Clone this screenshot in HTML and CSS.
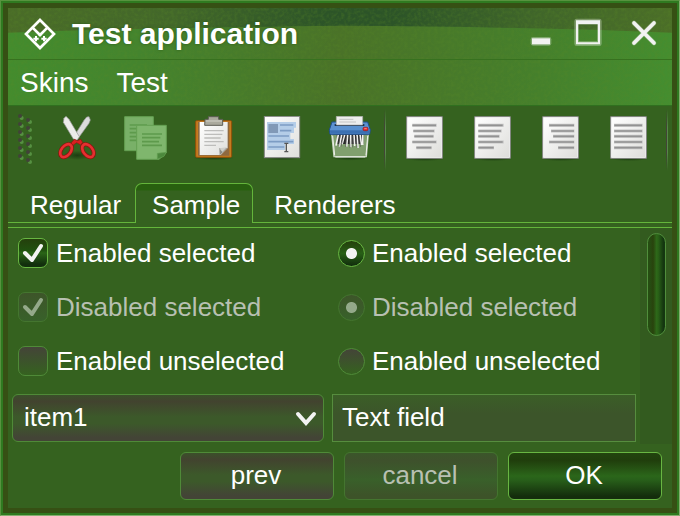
FILE: index.html
```html
<!DOCTYPE html>
<html lang="en">
<head>
<meta charset="utf-8">
<meta name="viewport" content="width=device-width, initial-scale=1">
<title>Test application</title>
<link rel="stylesheet" href="styles.css">
</head>
<body>
<div class="window">
  <div class="frame">
    <header class="header">
      <svg class="texture" viewBox="0 0 664 98" preserveAspectRatio="none" aria-hidden="true">
        <defs>
          <linearGradient id="band"><stop offset="0" stop-color="#4a6c28"/><stop offset=".25" stop-color="#42672a"/><stop offset=".48" stop-color="#2c5428"/><stop offset=".58" stop-color="#2c5428"/><stop offset=".8" stop-color="#40662a"/><stop offset="1" stop-color="#4b6e28"/></linearGradient>
          <linearGradient id="field"><stop offset="0" stop-color="#438c2e"/><stop offset=".2" stop-color="#44842e"/><stop offset=".5" stop-color="#4a7228"/><stop offset=".8" stop-color="#45802c"/><stop offset="1" stop-color="#448e30"/></linearGradient>
          <filter id="noise" x="0" y="0" width="100%" height="100%"><feTurbulence type="fractalNoise" baseFrequency=".3" numOctaves="2" seed="4"/><feColorMatrix values="0 0 0 0 .1  0 0 0 0 .25  0 0 0 0 .02  1.6 0 0 0 -.6"/></filter>
        </defs>
        <path fill="url(#field)" d="M0 0h664v98H0z"/>
        <path fill="url(#band)" d="M0 0H664V25Q520 19 332 18Q140 20 0 25z"/>
        <path filter="url(#noise)" opacity=".4" d="M0 0h664v98H0z"/>
      </svg>
      <div class="titlebar">
        <svg class="logo" viewBox="0 0 120 120" aria-hidden="true"><path fill="none" stroke="#fff" stroke-width="8" d="M60 18L102 60 60 102 18 60zM40 43L60 63 80 43"/><path fill="#fff" d="M56 58h8v8h-8zM45 66h6v5h5v6h-5v5h-6v-5h-5v-6h5zM69 66h6v5h5v6h-5v5h-6v-5h-5v-6h5z"/></svg>
        <h1 class="title">Test application</h1>
        <div class="controls">
          <button class="control" type="button" aria-label="Minimize"><svg viewBox="0 5 96 96"><path class="halo" d="M51 69h48v12H51z"/><path fill="#f2f2f2" d="M48 66h54v18H48z"/></svg></button>
          <button class="control" type="button" aria-label="Maximize"><svg viewBox="0 5 96 96"><path class="halo" d="M14 14h68v68H14z"/><path fill="#f2f2f2" fill-rule="evenodd" d="M12 12h72v72H12zM18 24v54h60V24z"/></svg></button>
          <button class="control" type="button" aria-label="Close"><svg viewBox="0 5 96 96"><path class="halo" d="M18 20L78 80M78 20L18 80"/><path fill="none" stroke="#f2f2f2" stroke-width="11" stroke-linecap="round" d="M18 20L78 80M78 20L18 80"/></svg></button>
        </div>
      </div>
      <nav class="menubar"><a href="#skins">Skins</a><a href="#test">Test</a></nav>
    </header>

    <div class="toolbar" role="toolbar" aria-label="Edit">
      <svg class="grip" viewBox="48 30 54 180" aria-hidden="true">
        <g fill="#569042"><circle cx="65" cy="54" r="6"/><circle cx="65" cy="78" r="6"/><circle cx="65" cy="102" r="6"/><circle cx="65" cy="126" r="6"/><circle cx="65" cy="150" r="6"/><circle cx="65" cy="174" r="6"/><circle cx="90" cy="66" r="6"/><circle cx="90" cy="90" r="6"/><circle cx="90" cy="114" r="6"/><circle cx="90" cy="138" r="6"/><circle cx="90" cy="162" r="6"/><circle cx="90" cy="186" r="6"/></g>
        <g fill="#424239"><circle cx="60" cy="48" r="6"/><circle cx="60" cy="72" r="6"/><circle cx="60" cy="96" r="6"/><circle cx="60" cy="120" r="6"/><circle cx="60" cy="144" r="6"/><circle cx="60" cy="168" r="6"/><circle cx="84" cy="60" r="6"/><circle cx="84" cy="84" r="6"/><circle cx="84" cy="108" r="6"/><circle cx="84" cy="132" r="6"/><circle cx="84" cy="156" r="6"/><circle cx="84" cy="180" r="6"/></g>
      </svg>
      <button class="tool" type="button" aria-label="Cut"><svg viewBox="159 48 144 144">
        <defs><radialGradient id="shade"><stop offset="0" stop-color="#0c2408" stop-opacity=".6"/><stop offset="1" stop-color="#0c2408" stop-opacity="0"/></radialGradient></defs>
        <ellipse cx="232" cy="166" rx="42" ry="14" fill="url(#shade)"/>
        <path d="M267 50L271 60 267 70 236 113 226 121 222 109 252 61 260 51z" fill="#dcdcdc" stroke="#979797" stroke-width="2"/>
        <path d="M198 49L192 55 190 67 220 117 231 121 238 110 207 58z" fill="#ececea" stroke="#979797" stroke-width="2"/>
        <g fill="none" stroke="#920f0f" stroke-width="12"><ellipse cx="198" cy="152" rx="14" ry="22" transform="rotate(38 198 152)"/><ellipse cx="264" cy="152" rx="14" ry="22" transform="rotate(-38 264 152)"/></g>
        <path d="M223 118L232 122 242 118 248 127 242 135 230 128 219 136 213 129z" fill="#d92020" stroke="#920f0f" stroke-width="2"/>
        <g fill="none" stroke="#e53030" stroke-width="8"><ellipse cx="198" cy="152" rx="14" ry="22" transform="rotate(38 198 152)"/><ellipse cx="264" cy="152" rx="14" ry="22" transform="rotate(-38 264 152)"/></g>
      </svg></button>
      <button class="tool" type="button" aria-label="Copy" disabled><svg viewBox="363 48 144 144">
        <path fill="#79b068" stroke="#64a052" stroke-width="3" d="M374 50h86v102h-86z"/><path fill="none" stroke="#5e9a4c" stroke-width="5" d="M389 75h52M389 86h45M389 98h52M389 110h43M389 121h47"/>
        <path fill="#7fb66d" stroke="#64a052" stroke-width="3" d="M410 76h89v82l-22 20h-67z"/><path fill="none" stroke="#5e9a4c" stroke-width="5" d="M426 102h60M426 113h55M426 125h51M426 136h60"/><path fill="#4c883c" stroke="#64a052" stroke-width="2" d="M472 178v-18l27-3-7 12z"/>
      </svg></button>
      <button class="tool" type="button" aria-label="Paste"><svg viewBox="12 48 144 144">
        <defs><linearGradient id="paper" x1="0" y1="0" x2="1" y2="1"><stop offset="0" stop-color="#fff"/><stop offset="1" stop-color="#dededb"/></linearGradient></defs>
        <ellipse cx="86" cy="174" rx="62" ry="7" fill="url(#shade)"/>
        <rect x="32" y="62" width="108" height="110" rx="3" fill="#c67b20" stroke="#8f5008" stroke-width="3"/><path fill="#8e6940" d="M39 66h94v101H39z"/>
        <path fill="url(#paper)" d="M44 66h84v78l-21 21H44z"/><path fill="none" stroke="#bdbdbb" stroke-width="4" d="M58 92h58M58 103h54M58 114h49M58 125h58M58 136h35"/>
        <path fill="#8c8c86" d="M103 144h24l-23 22z"/><path fill="#cfcfca" d="M103 145l23-3-14 14z"/>
        <path fill="#aaa99d" stroke="#5d5d55" stroke-width="3" d="M60 58h10v-8h31v8h12v18H59z"/><path stroke="#d2d1c8" stroke-width="3" d="M62 63h49"/>
      </svg></button>
      <button class="tool" type="button" aria-label="Select all"><svg viewBox="216 48 144 144">
        <ellipse cx="291" cy="174" rx="62" ry="7" fill="url(#shade)"/><rect x="238" y="49" width="106" height="124" fill="url(#paper)" stroke="#858585" stroke-width="3"/>
        <path fill="#b4cde8" d="M246 66h87v17h-6v16h-11v18h11v15h-27v18h-54z"/><path fill="#8199b7" d="M250 72h29v27h-29z"/><path fill="none" stroke="#7c9cc4" stroke-width="5" d="M285 75h40M285 92h34M250 108h62M250 125h75M250 141h48"/>
        <path fill="none" stroke="#555" stroke-width="4" d="M304 131v23M298 130h12M298 155h12"/>
      </svg></button>
      <button class="tool" type="button" aria-label="Delete"><svg viewBox="420 48 144 144">
        <ellipse cx="495" cy="174" rx="60" ry="8" fill="url(#shade)"/><path fill="#809f6e" stroke="#c8d4c1" stroke-width="4" d="M440 100h110l-6 70h-97z"/><path fill="none" stroke="#eef1eb" stroke-width="3" d="M451 171h90M443 108l6 58M548 108l-5 58"/>
        <path fill="#282828" d="M455 103h80v29h-78z"/>
        <path fill="none" stroke="#f2f2f0" stroke-width="5" d="M460 104l-7 33M470 104l-7 36M479 104l-8 29M488 104l-3 36M497 104v38M507 104l2 34M516 104l3 40M525 104l4 31M533 104v31"/>
        <path fill="none" stroke="#555" stroke-width="2" d="M465 107l-4 32M475 107l-7 33M484 106l-2 35M493 107l2 37M503 107v35M513 107l3 36M522 107l5 34"/>
        <path fill="#5b91d0" stroke="#204e8c" stroke-width="3" d="M441 66h107l8 24-2 13H435l-2-13z"/><path fill="#3b70b2" d="M434 91h121l-2 10H437z"/>
        <path stroke="#18304f" stroke-width="6" d="M449 75h89"/><path fill="#eee" stroke="#aaa" stroke-width="2" d="M454 49h79v26h-79z"/><path fill="none" stroke="#c4c4c4" stroke-width="3" d="M463 58h42M463 66h50"/><rect x="534" y="82" width="15" height="10" rx="4" fill="#ee3333" stroke="#920f0f" stroke-width="2"/><path stroke="#fff" stroke-opacity=".65" stroke-width="2" d="M538 85h7"/>
      </svg></button>
      <span class="separator"></span>
      <button class="tool" type="button" aria-label="Align center"><svg viewBox="60 48 144 144"><ellipse cx="134" cy="177" rx="62" ry="6" fill="url(#shade)"/><path fill="#fff" stroke="#858585" stroke-width="3" d="M80 50h107v125H80z"/><path fill="url(#paper)" d="M84 54h99v118H84z"/><path class="lines-soft" d="M97 76h73M100 93h64M103 109h58M97 126h73M109 143h46"/><path class="lines" d="M97 76h71M100 93h62M103 109h57M97 126h71M109 143h45"/></svg></button>
      <button class="tool" type="button" aria-label="Align left"><svg viewBox="264 48 144 144"><ellipse cx="338" cy="177" rx="62" ry="6" fill="url(#shade)"/><path fill="#fff" stroke="#858585" stroke-width="3" d="M284 50h107v125H284z"/><path fill="url(#paper)" d="M288 54h99v118h-99z"/><path class="lines-soft" d="M295 76h76M295 93h70M295 109h64M295 126h76M295 143h47"/><path class="lines" d="M295 76h73M295 93h68M295 109h62M295 126h73M295 143h46"/></svg></button>
      <button class="tool" type="button" aria-label="Align right"><svg viewBox="468 48 144 144"><ellipse cx="542" cy="177" rx="62" ry="6" fill="url(#shade)"/><path fill="#fff" stroke="#858585" stroke-width="3" d="M488 50h107v125H488z"/><path fill="url(#paper)" d="M492 54h99v118h-99z"/><path class="lines-soft" d="M507 76h76M513 93h70M519 109h64M507 126h76M534 143h49"/><path class="lines" d="M508 76h74M514 93h68M520 109h62M508 126h74M535 143h47"/></svg></button>
      <button class="tool" type="button" aria-label="Justify"><svg viewBox="672 48 144 144"><ellipse cx="746" cy="177" rx="62" ry="6" fill="url(#shade)"/><path fill="#fff" stroke="#858585" stroke-width="3" d="M692 50h107v125H692z"/><path fill="url(#paper)" d="M696 54h99v118h-99z"/><path class="lines-soft" d="M702 76h86M702 93h86M702 109h86M702 126h86M702 143h86"/><path class="lines" d="M703 76h83M703 93h83M703 109h83M703 126h83M703 143h83"/></svg></button>
      <span class="separator end"></span>
    </div>

    <div class="tabs" role="tablist">
      <button class="tab" role="tab" type="button" aria-selected="false">Regular</button>
      <button class="tab selected" role="tab" type="button" aria-selected="true">Sample</button>
      <button class="tab" role="tab" type="button" aria-selected="false">Renderers</button>
      <span class="tab-fill"></span>
    </div>

    <form class="content">
      <div class="panel">
        <div class="fields">
          <label class="option"><span class="check"><input type="checkbox" checked><svg viewBox="0 0 30 30"><path d="M7 15l7 7 9-14"/></svg></span>Enabled selected</label>
          <label class="option"><span class="radio"><input type="radio" name="enabled" checked></span>Enabled selected</label>
          <label class="option off"><span class="check"><input type="checkbox" checked disabled><svg viewBox="0 0 30 30"><path d="M7 15l7 7 9-14"/></svg></span>Disabled selected</label>
          <label class="option off"><span class="radio"><input type="radio" name="disabled" checked disabled></span>Disabled selected</label>
          <label class="option"><span class="check"><input type="checkbox"></span>Enabled unselected</label>
          <label class="option"><span class="radio"><input type="radio" name="enabled"></span>Enabled unselected</label>
          <div class="combo">
            <select aria-label="Item"><option>item1</option></select>
            <svg class="arrow" viewBox="0 0 24 20" aria-hidden="true"><path d="M4 5l8 9 8-9"/></svg>
          </div>
          <input class="text" type="text" aria-label="Text field" value="Text field">
        </div>
        <div class="scrollbar"><div class="thumb"></div></div>
      </div>
      <footer class="actions">
        <button class="button" type="button">prev</button>
        <button class="button" type="button" disabled>cancel</button>
        <button class="button primary" type="submit">OK</button>
      </footer>
    </form>
  </div>
</div>
</body>
</html>
```

FILE: styles.css
```css
*, *::before, *::after { box-sizing: border-box; }

body {
  margin: 0;
  color: #fff;
  background: #35621f;
  font-family: "Liberation Sans", Arial, sans-serif;
  font-size: 26px;
  line-height: 30px;
}

button, input, select {
  margin: 0;
  color: inherit;
  font: inherit;
}

.window {
  display: flex;
  min-height: 100vh;
  border: 1px solid;
  border-color: #58923f #86ad70 #86ad70 #58923f;
  background: #2f7a20;
  padding: 2px;
}

.frame {
  display: flex;
  flex: 1;
  flex-direction: column;
  min-width: 0;
  border: 5px solid #365014;
  background: #35621f;
}

.header {
  position: relative;
  border-bottom: 1px solid #30701f;
}

.texture {
  position: absolute;
  inset: 0;
  width: 100%;
  height: 100%;
}

.titlebar {
  position: relative;
  display: flex;
  align-items: center;
  height: 52px;
  padding: 0 12px;
  border-bottom: 1px solid #37711f;
}

.logo { width: 40px; height: 40px; }

.title {
  flex: 1;
  margin: 0 0 0 12px;
  font-size: 30px;
  line-height: 36px;
  text-shadow: 0 0 3px #2a5a18;
}

.controls { display: flex; gap: 24px; }

.control {
  width: 32px;
  height: 32px;
  padding: 0;
  border: 0;
  background: none;
}

.control svg { display: block; width: 32px; height: 32px; overflow: visible; }

.halo {
  fill: none;
  stroke: #fff;
  stroke-width: 14;
  stroke-linejoin: round;
  stroke-linecap: round;
  opacity: .3;
}

.menubar {
  position: relative;
  display: flex;
  gap: 28px;
  padding: 7px 12px 6px;
  font-size: 28px;
  line-height: 32px;
}

.menubar a { color: inherit; text-decoration: none; }

.toolbar {
  display: flex;
  height: 68px;
}

.grip { width: 18px; height: 60px; margin: 4px 9px 0 8px; }

.tool {
  flex: 0 0 68px;
  padding: 0;
  border: 0;
  background: none;
}

.tool svg { display: block; width: 48px; height: 48px; margin: 0 auto; }

.lines, .lines-soft { fill: none; stroke: #929292; stroke-width: 5; }
.lines-soft { stroke: #c3c3c3; stroke-width: 9; }

.separator {
  flex: 0 0 2px;
  margin: 3px 4px 3px 1px;
  background: linear-gradient(90deg, #444438 50%, #57884a 50%);
  -webkit-mask-image: linear-gradient(transparent, #000 30%, #000 70%, transparent);
  mask-image: linear-gradient(transparent, #000 30%, #000 70%, transparent);
}

.separator.end { margin-left: 4px; }

.tabs {
  display: flex;
  padding-top: 9px;
}

.tab {
  height: 40px;
  padding: 4px 16px 0;
  border: 0;
  border-bottom: 1px solid #64b53b;
  background: none;
}

.tab:first-child { padding: 4px 14px 0 22px; }

.tab:nth-child(3) { padding-left: 21px; }

.tab.selected {
  border: 1px solid #64b53b;
  border-bottom: 0;
  border-radius: 7px 7px 0 0;
  padding: 2px 12px 0 16px;
  background: linear-gradient(#28600f 6px, #35621f 7px);
}

.tab-fill { flex: 1; border-bottom: 1px solid #64b53b; }

.content {
  display: flex;
  flex: 1;
  flex-direction: column;
  margin-top: 4px;
  border-top: 1px solid #64b53b;
}

.panel { display: flex; flex: 1; }

.fields {
  display: grid;
  flex: 1;
  grid-template-columns: 39fr 38fr;
  grid-auto-rows: 50px;
  align-content: start;
  gap: 4px 8px;
  padding: 0 4px;
}

.option {
  display: flex;
  align-items: center;
  gap: 8px;
  padding-left: 6px;
  white-space: nowrap;
}

.option:nth-child(even) { gap: 7px; }

.option.off { color: #b8c0b2; }

.check, .radio { position: relative; display: flex; }

.check input, .radio input {
  appearance: none;
  width: 30px;
  height: 30px;
  border: 1px solid #4f8a38;
  border-radius: 7px;
  background: linear-gradient(#444438, #35621f);
}

.radio input {
  width: 27px;
  height: 27px;
  border-radius: 50%;
}

.check input:checked:enabled {
  border-color: #68b642;
  background: linear-gradient(#243f0c, #20500f 40%, #2a6517 50%, #122f0d 90%);
}

.radio input:checked:enabled {
  border-color: #68b642;
  background: radial-gradient(circle, #f3f3f3 5px, transparent 6px), linear-gradient(#243f0c, #285f16 50%, #102b0c);
}

.check input:disabled, .radio input:disabled {
  border-color: #44752f;
  background: linear-gradient(#3d5529, #38612a);
}

.radio input:disabled {
  background: radial-gradient(circle, #94a98a 5px, transparent 6px), linear-gradient(#3d5529, #38612a);
}

.check svg {
  position: absolute;
  inset: 0;
  fill: none;
  stroke: #f3f3f3;
  stroke-width: 4;
  stroke-linecap: round;
  stroke-linejoin: round;
  pointer-events: none;
}

.off svg { stroke: #94a98a; }

.combo {
  position: relative;
  height: 48px;
  margin-top: 4px;
}

.combo select, .button {
  border: 1px solid #4f8a38;
  border-radius: 6px;
  background: linear-gradient(#3b4f2a, #42432f 14%, #3c592a 48%, #3c592a 62%, #434436 92%);
}

.combo select {
  appearance: none;
  width: 100%;
  height: 48px;
  padding: 0 40px 2px 11px;
}

.arrow {
  position: absolute;
  top: 15px;
  right: 6px;
  width: 24px;
  height: 20px;
  fill: none;
  stroke: #f3f3f3;
  stroke-width: 4;
  stroke-linecap: round;
  pointer-events: none;
}

.text {
  width: 100%;
  min-width: 0;
  height: 48px;
  margin-top: 4px;
  padding: 0 9px 2px;
  border: 1px solid #568d3e;
  background: linear-gradient(#3b5e27, #3c552a 40%);
}

.scrollbar {
  flex: 0 0 32px;
  padding: 5px 6px 0 7px;
  background: #335b1f;
}

.thumb {
  height: 103px;
  border: 1px solid #508e3c;
  border-radius: 10px;
  background: linear-gradient(90deg, #264d12 10%, #29430d 30%, #2d6819 50%, #2a6117 60%, #143710 90%);
}

.actions {
  display: flex;
  justify-content: flex-end;
  gap: 10px;
  padding: 8px 10px;
}

.button {
  width: 154px;
  height: 48px;
  padding: 0 2px 2px 0;
}

.button:disabled {
  border-color: #44752f;
  color: #b8c0b2;
  background: linear-gradient(#3b562a, #3e512c 16%, #39602a 58%, #3d5329 92%);
}

.button.primary {
  border-color: #68b642;
  background: linear-gradient(#22440e, #203e0c 16%, #2b661a 50%, #28601a 58%, #142d0c 94%);
}
```
